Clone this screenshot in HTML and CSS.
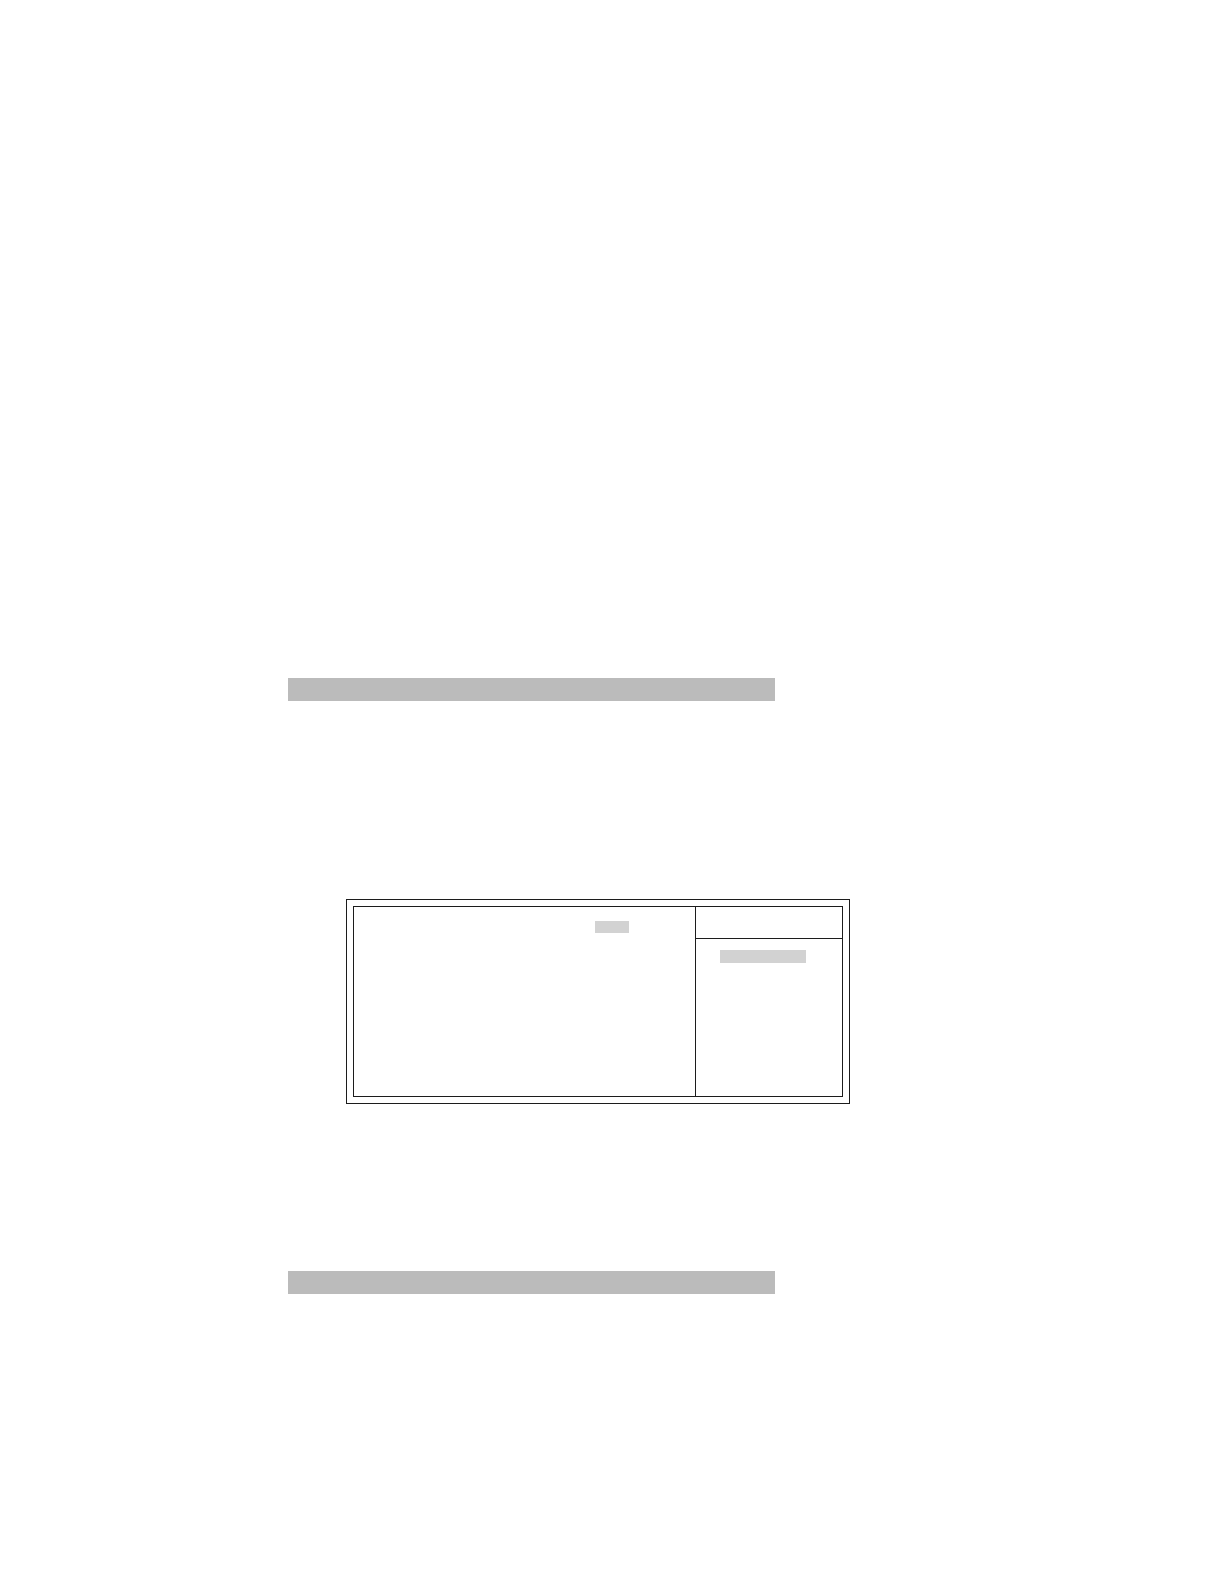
FILE: index.html
```html
<!DOCTYPE html>
<html lang="en">
<head>
	<meta charset="UTF-8">
	<title>Setup screen</title>
	<link rel="stylesheet" href="styles.css">
</head>
<body>
	<main class="page">
		<div class="bar"></div>

		<!-- setup menu -->
		<section class="frame">
			<div class="panel">
				<div class="options">
					<div class="mark mark-value"></div>
				</div>
				<div class="help">
					<div class="help-title"></div>
					<div class="help-body">
						<div class="mark mark-level"></div>
					</div>
				</div>
			</div>
		</section>

		<div class="bar"></div>
	</main>
</body>
</html>
```
FILE: styles.css
```css
*{margin:0;padding:0;box-sizing:border-box;}
body{background:#fff;}

.page{max-width:648px;min-height:100vh;margin:0 auto;padding-top:678px;}

/* grey heading bars */
.bar{max-width:487px;height:23px;background:#bbb;}

/* double frame */
.frame{max-width:504px;margin:198px 86px 167px 58px;padding:6px;border:1px solid #1c1c1c;}
.panel{display:grid;grid-template-columns:1fr 147px;min-height:191px;border:1px solid #1c1c1c;}

.options{padding:14px 0 0 241px;}
.help{border-left:1px solid #1c1c1c;}
.help-title{height:32px;border-bottom:1px solid #1c1c1c;}
.help-body{padding:11px 36px 0 24px;}

/* highlighted values */
.mark{background:#d2d2d2;}
.mark-value{width:34px;height:12px;}
.mark-level{height:13px;}
```
